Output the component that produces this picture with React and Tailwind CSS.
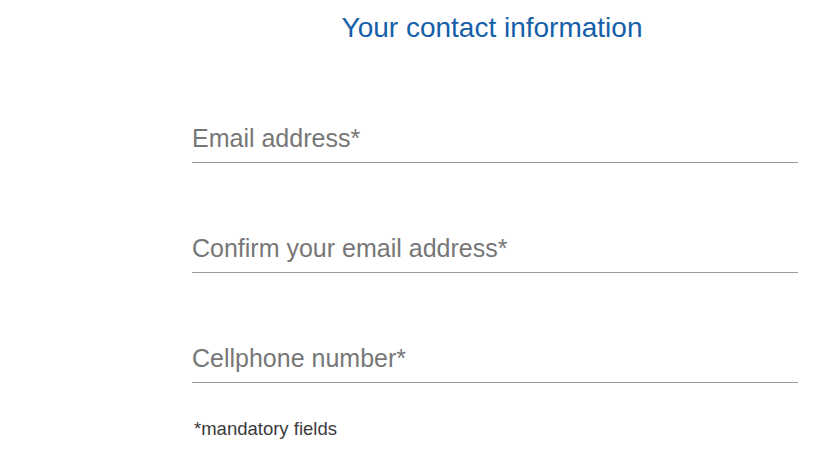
import React from 'react';

const fields = [
  { id: 'email', label: 'Email address*', type: 'email' },
  { id: 'confirm', label: 'Confirm your email address*', type: 'email' },
  { id: 'phone', label: 'Cellphone number*', type: 'tel' },
];

export default function App() {
  return (
    <div className="min-h-[459px] w-full bg-white font-['Liberation_Sans',Arial,sans-serif]">
      <div className="ml-[192px] w-[606px] pt-[12px]">
        <h1 className="text-center text-[28px] leading-[32px] font-normal text-[#1560a8] pr-[6px]">
          Your contact information
        </h1>

        <form className="mt-[80px] flex flex-col gap-[71px]">
          {fields.map((f) => (
            <div key={f.id} className="border-b border-[#9a9a9a] pb-[10px]">
              <input
                id={f.id}
                type={f.type}
                placeholder={f.label}
                className="block w-full bg-transparent p-0 text-[25px] leading-[28px] h-[28px] text-[#333] placeholder:text-[#777] outline-none"
              />
            </div>
          ))}
        </form>

        <p className="mt-[35px] pl-[2px] text-[18.5px] leading-[22px] text-[#3a3a3a]">
          *mandatory fields
        </p>
      </div>
    </div>
  );
}
